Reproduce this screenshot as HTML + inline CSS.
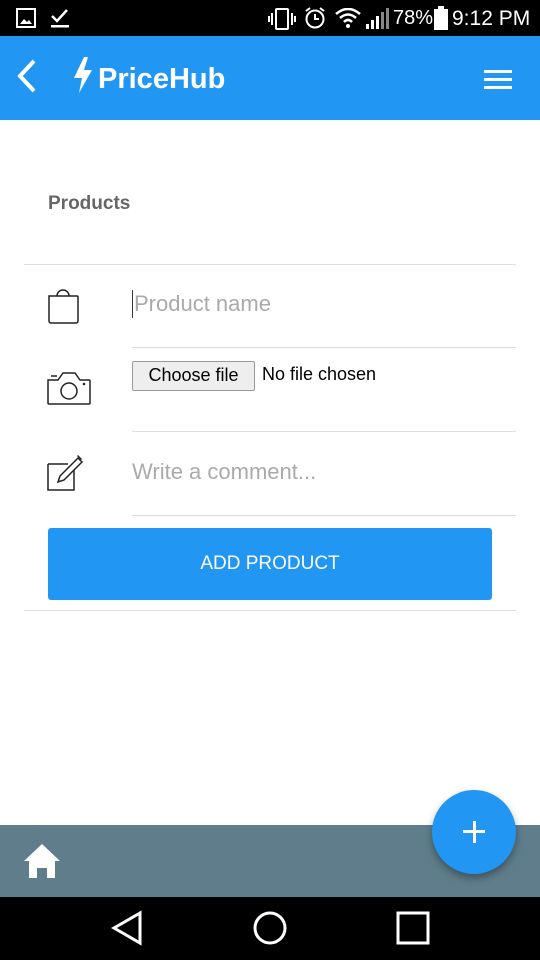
<!DOCTYPE html>
<html><head><style>
*{margin:0;padding:0;box-sizing:border-box}
body{width:540px;height:960px;position:relative;background:#fff;font-family:"Liberation Sans",sans-serif;overflow:hidden}
.abs{position:absolute}
.status{top:0;left:0;width:540px;height:36px;background:#000;color:#fff}
.bar{top:36px;left:0;width:540px;height:84px;background:#2196f3}
.line{height:1px;background:#ddd}
</style></head><body>
<div class="abs status">
<svg class="abs" style="left:16px;top:8px" width="20" height="20"><rect x="1" y="1" width="18" height="18" fill="none" stroke="#fff" stroke-width="2"/><path d="M4 16 L8 11 L11 14 L13 12 L16 16Z" fill="#fff"/></svg>
<svg class="abs" style="left:50px;top:6px" width="20" height="24"><path d="M2 10 L7 15 L17 4" fill="none" stroke="#fff" stroke-width="2.5"/><rect x="1" y="19" width="18" height="2.5" fill="#fff"/></svg>
<svg class="abs" style="left:268px;top:8px" width="30" height="22"><rect x="8" y="1" width="12" height="20" rx="1" fill="none" stroke="#fff" stroke-width="2"/><path d="M4 5v12M1 8v6M24 5v12M27 8v6" stroke="#fff" stroke-width="2"/></svg>
<svg class="abs" style="left:303px;top:6px" width="24" height="24"><circle cx="12" cy="13" r="8.5" fill="none" stroke="#fff" stroke-width="2"/><path d="M12 8v5h4M3 5l4-3M21 5l-4-3" stroke="#fff" stroke-width="2" fill="none"/></svg>
<svg class="abs" style="left:335px;top:8px" width="26" height="20"><path d="M1 6 Q13 -4 25 6M5 10 Q13 3 21 10M9 14 Q13 10 17 14" fill="none" stroke="#fff" stroke-width="2.5"/><circle cx="13" cy="18" r="2" fill="#fff"/></svg>
<svg class="abs" style="left:364px;top:6px" width="26" height="24"><rect x="2" y="18" width="3" height="5" fill="#fff"/><rect x="7" y="14" width="3" height="9" fill="#fff"/><rect x="12" y="10" width="3" height="13" fill="#fff"/><rect x="17" y="6" width="3" height="17" fill="#888"/><rect x="22" y="2" width="3" height="21" fill="#888"/></svg>
<div class="abs" style="left:393px;top:7px;font-size:20px">78%</div>
<svg class="abs" style="left:434px;top:6px" width="14" height="24"><rect x="4" y="0" width="6" height="3" fill="#fff"/><rect x="0" y="3" width="14" height="21" fill="#fff"/></svg>
<div class="abs" style="left:452px;top:7px;font-size:21px">9:12 PM</div>
</div>
<div class="abs bar">
<svg class="abs" style="left:14px;top:22px" width="24" height="36"><path d="M20 3 L6 18 L20 33" fill="none" stroke="#fff" stroke-width="4"/></svg>
<svg class="abs" style="left:72px;top:20px" width="22" height="38"><path d="M12 1 L2 22 L10 22 L7 37 L20 14 L12 14 L16 1Z" fill="#fff"/></svg>
<div class="abs" style="left:98px;top:27px;color:#fff;font-size:29px;font-weight:bold">PriceHub</div>
<div class="abs" style="left:484px;top:34px;width:28px;height:3px;background:#fff;box-shadow:0 8px 0 #fff,0 16px 0 #fff"></div>
</div>
<div class="abs" style="left:48px;top:193px;font-size:19px;font-weight:bold;color:#666">Products</div>
<div class="abs line" style="left:24px;top:264px;width:492px"></div>
<svg class="abs" style="left:46px;top:286px" width="36" height="40"><path d="M3 10h28a1 1 0 0 1 1 1v24a2 2 0 0 1-2 2H5a2 2 0 0 1-2-2V11Z M11 10 A6 6 0 0 1 23 10" fill="none" stroke="#222" stroke-width="1.5"/></svg>
<div class="abs" style="left:132px;top:290px;width:1px;height:28px;background:#333"></div>
<div class="abs" style="left:134px;top:291px;font-size:22px;color:#aaa">Product name</div>
<div class="abs line" style="left:132px;top:347px;width:384px"></div>
<svg class="abs" style="left:46px;top:370px" width="46" height="36"><path d="M2 10h10l5-7h12l5 7h9a1 1 0 0 1 1 1v22a1 1 0 0 1-1 1H3a1 1 0 0 1-1-1Z M5 6h6" fill="none" stroke="#222" stroke-width="1.5"/><circle cx="23" cy="21" r="8" fill="none" stroke="#222" stroke-width="1.5"/><circle cx="38" cy="14" r="1.3" fill="#222"/></svg>
<div class="abs" style="left:132px;top:361px;width:123px;height:30px;background:#eee;border:1px solid #999;border-radius:2px;font-size:18px;line-height:27px;text-align:center;color:#000">Choose file</div>
<div class="abs" style="left:262px;top:364px;font-size:18px;color:#000">No file chosen</div>
<div class="abs line" style="left:132px;top:431px;width:384px"></div>
<svg class="abs" style="left:46px;top:454px" width="40" height="40"><path d="M2 10h20M2 10v26h26V16" fill="none" stroke="#222" stroke-width="1.5"/><path d="M12 28 L14 22 L32 4 L36 8 L18 26Z" fill="none" stroke="#222" stroke-width="1.5"/><path d="M31 2l4 4 1-1-4-4z" fill="#222"/></svg>
<div class="abs" style="left:132px;top:459px;font-size:22px;color:#aaa">Write a comment...</div>
<div class="abs line" style="left:132px;top:515px;width:384px"></div>
<div class="abs" style="left:48px;top:528px;width:444px;height:72px;background:#2196f3;border-radius:3px;color:#fff;font-size:19px;line-height:72px;text-align:center">ADD PRODUCT</div>
<div class="abs line" style="left:24px;top:610px;width:492px"></div>
<div class="abs" style="left:0;top:825px;width:540px;height:72px;background:#607d8b"></div>
<svg class="abs" style="left:22px;top:842px" width="40" height="38"><path d="M20 2 L38 19 L33 19 L33 36 L25 36 L25 26 L15 26 L15 36 L7 36 L7 19 L2 19Z" fill="#fff"/></svg>
<div class="abs" style="left:432px;top:790px;width:84px;height:84px;border-radius:50%;background:#2196f3;box-shadow:0 4px 8px rgba(0,0,0,.35)"></div>
<div class="abs" style="left:463px;top:830px;width:22px;height:3px;background:#fff"></div>
<div class="abs" style="left:472.5px;top:821px;width:3px;height:22px;background:#fff"></div>
<div class="abs" style="left:0;top:897px;width:540px;height:63px;background:#000"></div>
<svg class="abs" style="left:110px;top:910px" width="320" height="38"><path d="M30 3 L4 18 L30 33Z" fill="none" stroke="#fff" stroke-width="3"/><circle cx="160" cy="18" r="15" fill="none" stroke="#fff" stroke-width="3"/><rect x="288" y="3" width="30" height="30" fill="none" stroke="#fff" stroke-width="3"/></svg>
</body></html>
